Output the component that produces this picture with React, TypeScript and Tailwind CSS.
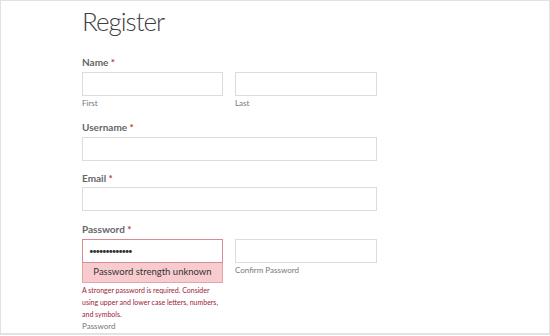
export default function App() {
  return (
    <div
      className="h-[336px] w-[550px] overflow-hidden bg-white"
      style={{ fontFamily: 'Lato, "Open Sans", sans-serif' }}
    >
      <div className="h-[335px] overflow-hidden border border-b-2 border-[#e2e2e2] bg-white pl-[81px]">
        <h1 className="mt-[4px] text-[26px] font-light leading-[32px] tracking-[-1px] text-[#3f3f3f]">
          Register
        </h1>

        <div className="mt-[19px] w-[295px]">
          <Label text="Name" />
          <div className="mt-[3px] flex gap-[12px]">
            <div className="w-[141px]">
              <div className="h-[24px] border border-[#dcdcdc] bg-white" />
              <p className="mt-[2px] text-[8px] leading-[10px] text-[#777]">First</p>
            </div>
            <div className="w-[142px]">
              <div className="h-[24px] border border-[#dcdcdc] bg-white" />
              <p className="mt-[2px] text-[8px] leading-[10px] text-[#777]">Last</p>
            </div>
          </div>

          <div className="mt-[13px]">
            <Label text="Username" />
            <div className="mt-[3px] h-[24px] border border-[#dcdcdc] bg-white" />
          </div>

          <div className="mt-[11px]">
            <Label text="Email" />
            <div className="mt-[2px] h-[24px] border border-[#dcdcdc] bg-white" />
          </div>

          <div className="mt-[12px]">
            <Label text="Password" />
            <div className="mt-[3px] flex gap-[12px]">
              <div className="w-[141px]">
                <div className="flex h-[24px] items-center border border-[#d98a92] bg-white px-[6px]">
                  <span className="text-[8px] leading-none tracking-[-1.4px] text-[#333]">
                    •••••••••••••
                  </span>
                </div>
                <div className="flex h-[20px] items-center justify-center whitespace-nowrap border border-t-0 border-[#e7a3aa] bg-[#f8cbcf] text-[9.5px] text-[#333]">
                  Password strength unknown
                </div>
                <p className="mt-[1px] whitespace-nowrap text-[7px] leading-[12px] text-[#9d1b35]">
                  A stronger password is required. Consider
                  <br />
                  using upper and lower case letters, numbers,
                  <br />
                  and symbols.
                </p>
                <p className="mt-[1px] text-[8px] leading-[10px] text-[#777]">Password</p>
              </div>
              <div className="w-[142px]">
                <div className="h-[24px] border border-[#dcdcdc] bg-white" />
                <p className="mt-[2px] text-[8px] leading-[10px] text-[#777]">Confirm Password</p>
              </div>
            </div>
          </div>
        </div>
      </div>
    </div>
  );
}

function Label({ text }: { text: string }) {
  return (
    <p className="text-[10px] font-bold leading-[13px] text-[#666]">
      {text} <span className="text-[#c0392b]">*</span>
    </p>
  );
}
